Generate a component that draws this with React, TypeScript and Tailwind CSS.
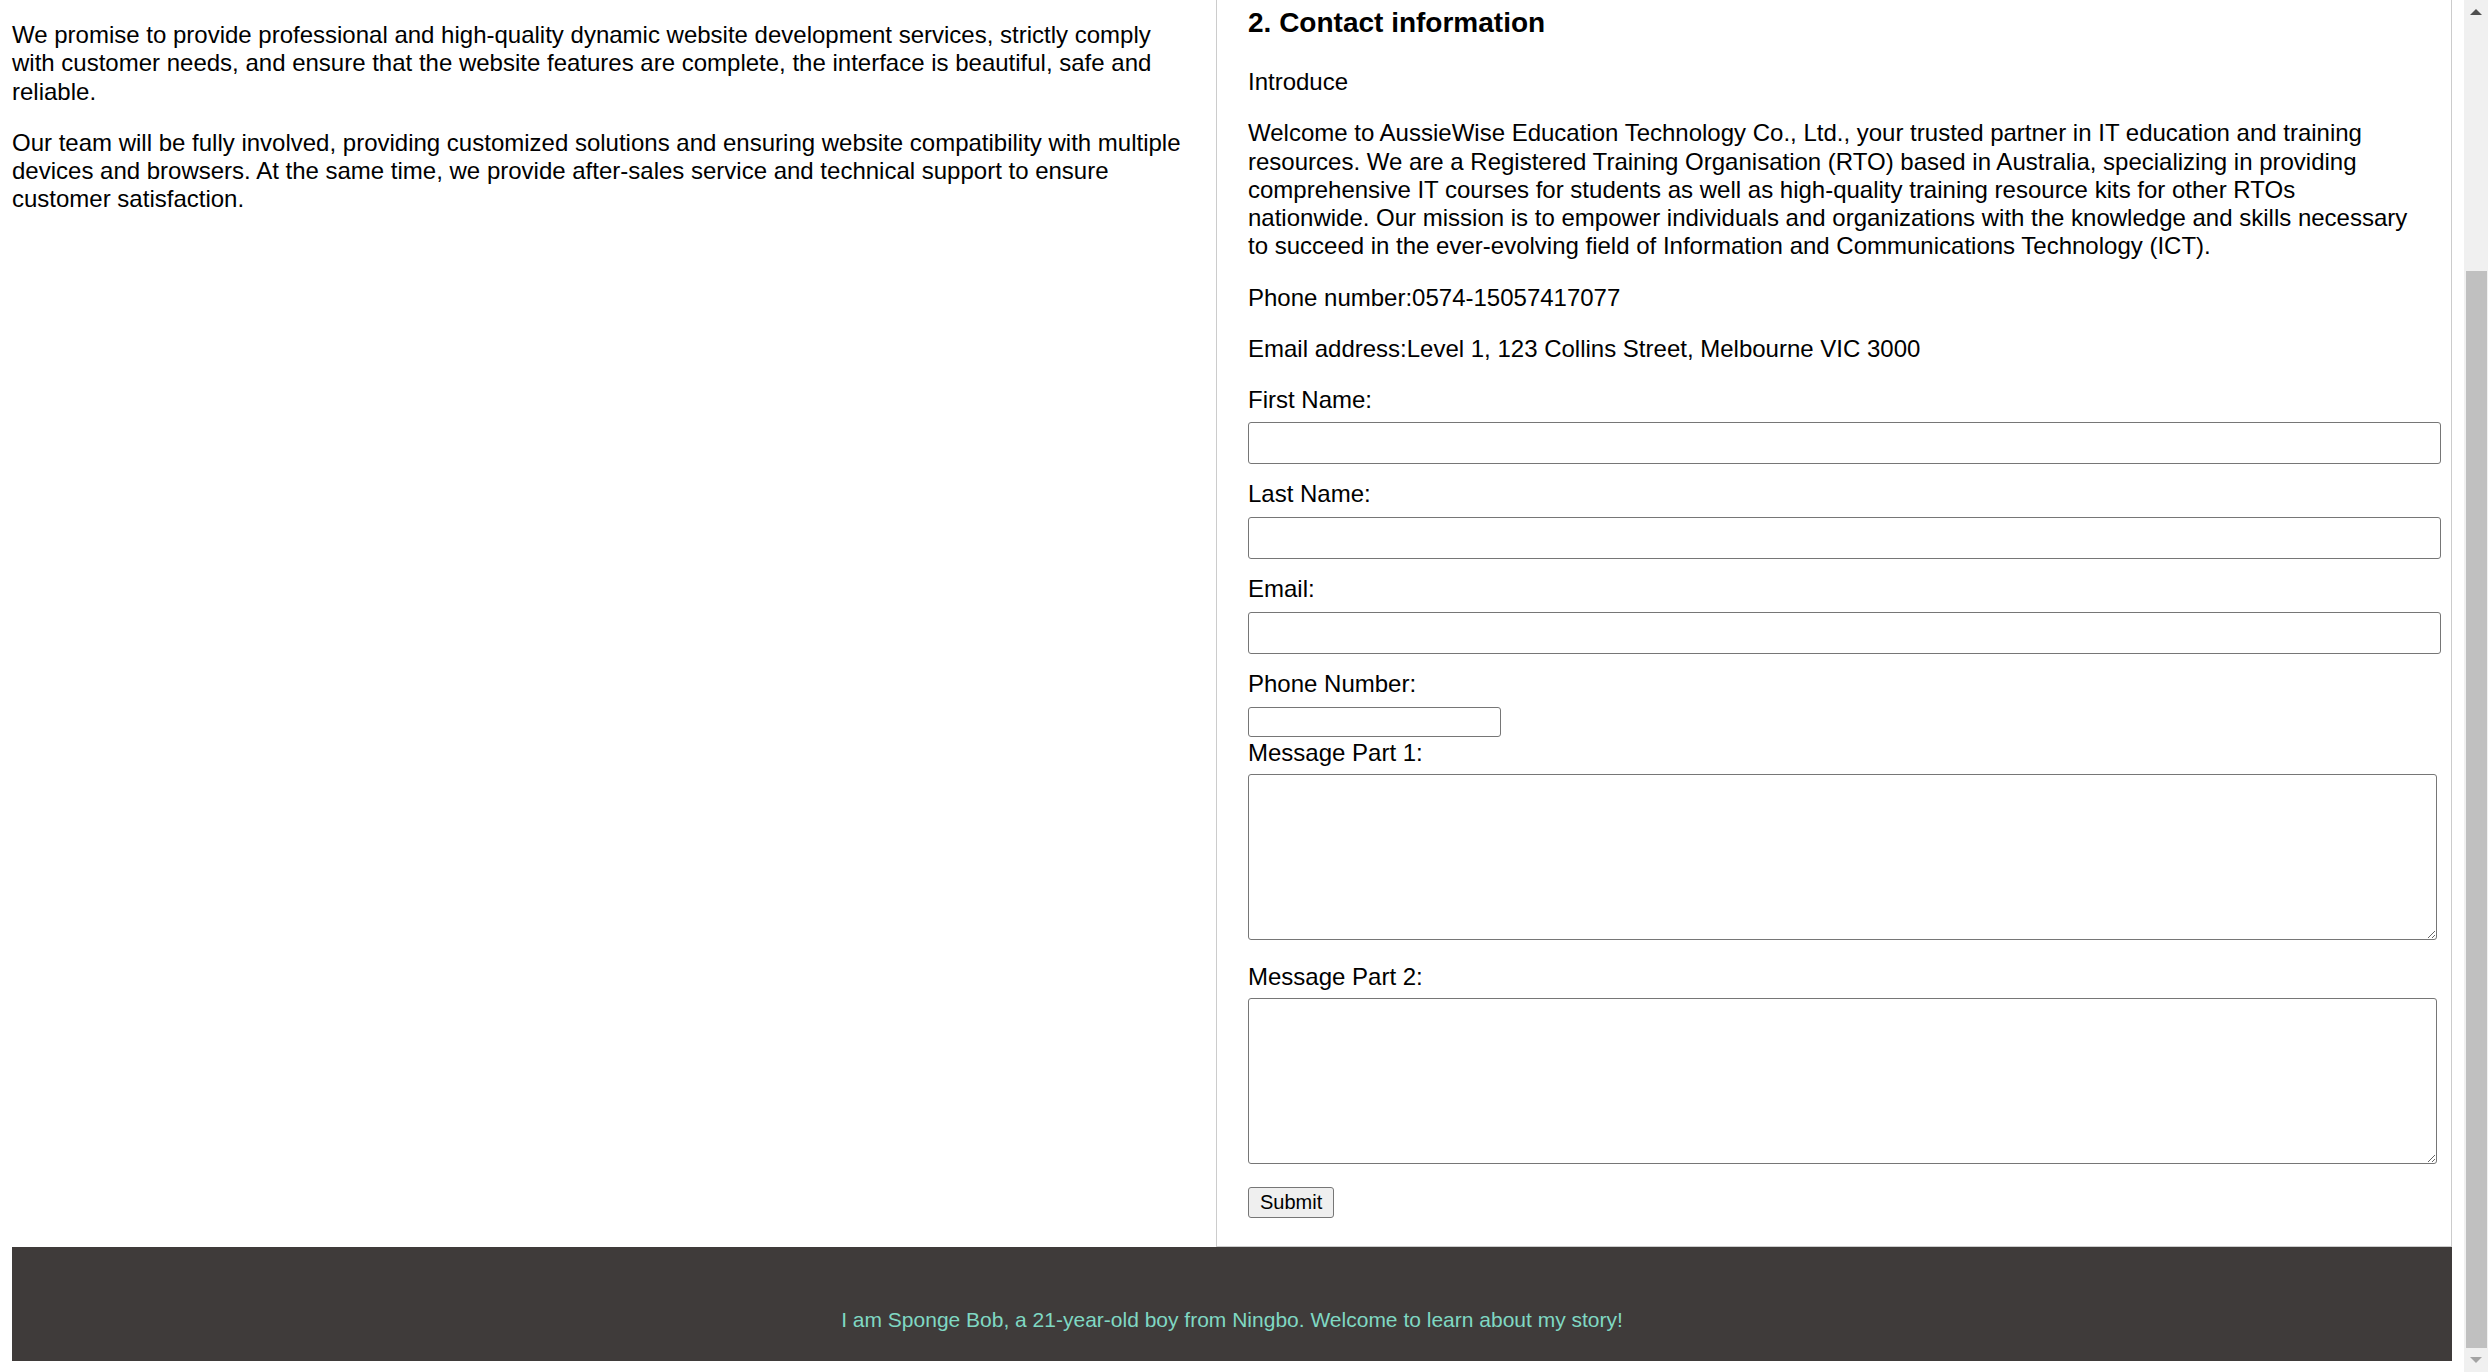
import { ReactNode } from 'react';

const Field = ({ label, children, gapBelow }: { label: string; children: ReactNode; gapBelow: string }) => (
  <div className={gapBelow}>
    <label className="block leading-[28px]">{label}</label>
    {children}
  </div>
);

const ScrollBar = () => (
  <div className="flex w-[24px] shrink-0 flex-col bg-[#f0f0f0]">
    <div className="flex h-[24px] items-center justify-center">
      <div className="h-0 w-0 border-x-[6px] border-b-[6px] border-x-transparent border-b-[#505050]" />
    </div>
    <div className="flex flex-1 flex-col pt-[247px] pl-[2px] pr-[1px]">
      <div className="flex-1 bg-[#c0c0c0]" />
    </div>
    <div className="flex h-[24px] items-center justify-center">
      <div className="h-0 w-0 border-x-[6px] border-t-[6px] border-x-transparent border-t-[#a3a3a3]" />
    </div>
  </div>
);

const App = () => {
  return (
    <div className="flex h-[1372px] w-full overflow-hidden bg-white font-['Liberation_Sans',Arial,sans-serif] text-[24px] text-black">
      <div className="flex min-w-0 flex-1 flex-col px-[12px] pb-[11px]">
        <div className="flex min-h-0 flex-1">
          {/* left column */}
          <div className="w-[1204px] shrink-0 pt-[21px] pr-[29px] leading-[28.25px]">
            <p className="mb-[23px]">
              We promise to provide professional and high-quality dynamic website development services, strictly comply
              with customer needs, and ensure that the website features are complete, the interface is beautiful, safe and
              reliable.
            </p>
            <p>
              Our team will be fully involved, providing customized solutions and ensuring website compatibility with
              multiple devices and browsers. At the same time, we provide after-sales service and technical support to
              ensure customer satisfaction.
            </p>
          </div>

          {/* right column */}
          <div className="w-[1236px] shrink-0 border-x border-b border-[#cccccc] pl-[31px] pr-[30px] leading-[28.25px]">
            <h3 className="mt-[7px] text-[28px] font-bold leading-[32px]">2. Contact information</h3>
            <p className="mt-[29px]">Introduce</p>
            <p className="mt-[23px]">
              Welcome to AussieWise Education Technology Co., Ltd., your trusted partner in IT education and training
              resources. We are a Registered Training Organisation (RTO) based in Australia, specializing in providing
              comprehensive IT courses for students as well as high-quality training resource kits for other RTOs
              nationwide. Our mission is to empower individuals and organizations with the knowledge and skills necessary
              to succeed in the ever-evolving field of Information and Communications Technology (ICT).
            </p>
            <p className="mt-[23px]">Phone number:0574-15057417077</p>
            <p className="mt-[23px]">Email address:Level 1, 123 Collins Street, Melbourne VIC 3000</p>

            <form className="mt-[23px]">
              <Field label="First Name:" gapBelow="mb-[16px]">
                <input type="text" className="mt-[8px] block h-[42px] w-[1193px] rounded-[3px] border border-[#767676] px-[8px]" />
              </Field>
              <Field label="Last Name:" gapBelow="mb-[16px]">
                <input type="text" className="mt-[9px] block h-[42px] w-[1193px] rounded-[3px] border border-[#767676] px-[8px]" />
              </Field>
              <Field label="Email:" gapBelow="mb-[16px]">
                <input type="email" className="mt-[9px] block h-[42px] w-[1193px] rounded-[3px] border border-[#767676] px-[8px]" />
              </Field>
              <Field label="Phone Number:" gapBelow="mb-[2px]">
                <input type="tel" className="mt-[9px] block h-[30px] w-[253px] rounded-[3px] border border-[#767676] px-[3px] text-[20px]" />
              </Field>
              <Field label="Message Part 1:" gapBelow="mb-[23px]">
                <textarea className="mt-[7px] block h-[166px] w-[1189px] rounded-[3px] border border-[#767676] p-[3px]" />
              </Field>
              <Field label="Message Part 2:" gapBelow="mb-[23px]">
                <textarea className="mt-[7px] block h-[166px] w-[1189px] rounded-[3px] border border-[#767676] p-[3px]" />
              </Field>
              <button
                type="button"
                className="block h-[31px] rounded-[3px] border border-[#767676] bg-[#efefef] px-[11px] text-[20px] leading-[23px]"
              >
                Submit
              </button>
            </form>
          </div>
        </div>

        <footer className="h-[114px] shrink-0 bg-[#3f3b3a] pt-[61px] text-center text-[21px] leading-[24px] text-[#7fd8c3]">
          I am Sponge Bob, a 21-year-old boy from Ningbo. Welcome to learn about my story!
        </footer>
      </div>
      <ScrollBar />
    </div>
  );
};

export default App;
